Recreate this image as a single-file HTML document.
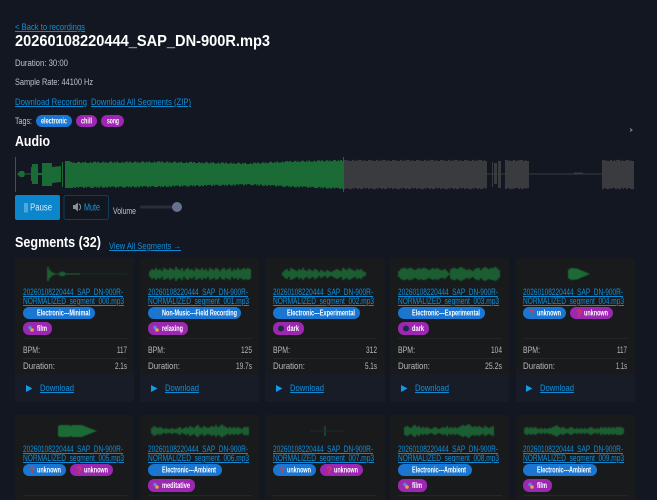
<!DOCTYPE html>
<html><head><meta charset="utf-8"><title>20260108220444_SAP_DN-900R.mp3</title>
<style>
html,body{margin:0;padding:0;background:#131722;width:657px;height:500px;overflow:hidden}
svg{display:block}
text{font-family:"Liberation Sans","DejaVu Sans",sans-serif}
.l{fill:#0f8fd9;font-size:9.5px;text-decoration:underline}
.g{fill:#bfc3ca;font-size:9.5px}
.h{fill:#fff;font-weight:bold}
.cl{fill:#0f90dc;font-size:9.5px;text-decoration:underline}
.p{fill:#fff;font-size:8px;font-weight:bold}
.k{fill:#b5b8bd;font-size:9.5px}
.v{fill:#b5b8bd;font-size:9.5px;text-anchor:end}
.w{stroke:#1c6b36;stroke-width:1.7;fill:none;filter:blur(.4px)}
.q{fill:#e5393f;font-size:10px;font-weight:bold}
.n{fill:#3f6f9c;font-size:8px}
</style></head><body>
<svg xmlns="http://www.w3.org/2000/svg" width="657" height="500" viewBox="0 0 657 500">
<rect width="657" height="500" fill="#131722"/>
<text class="l" x="15" y="30" textLength="70" lengthAdjust="spacingAndGlyphs">&lt; Back to recordings</text>
<text class="h" x="15" y="46" font-size="16" textLength="255" lengthAdjust="spacingAndGlyphs">20260108220444_SAP_DN-900R.mp3</text>
<text class="g" x="15" y="66" textLength="53" lengthAdjust="spacingAndGlyphs">Duration: 30:00</text>
<text class="g" x="15" y="85" textLength="78" lengthAdjust="spacingAndGlyphs">Sample Rate: 44100 Hz</text>
<text class="l" x="15" y="105" textLength="72" lengthAdjust="spacingAndGlyphs">Download Recording</text>
<text class="l" x="91" y="105" textLength="100" lengthAdjust="spacingAndGlyphs">Download All Segments (ZIP)</text>
<text class="g" x="15" y="124" textLength="17" lengthAdjust="spacingAndGlyphs">Tags:</text>
<rect x="36" y="115" width="36" height="12" rx="6" fill="#1976d2"/>
<text class="p" x="41" y="123.500" textLength="26" lengthAdjust="spacingAndGlyphs">electronic</text>
<rect x="76" y="115" width="21" height="12" rx="6" fill="#9c27b0"/>
<text class="p" x="81" y="123.500" textLength="11" lengthAdjust="spacingAndGlyphs">chill</text>
<rect x="101" y="115" width="23" height="12" rx="6" fill="#9c27b0"/>
<text class="p" x="107" y="123.500" textLength="12" lengthAdjust="spacingAndGlyphs">song</text>
<text class="h" x="15" y="146" font-size="15" textLength="35" lengthAdjust="spacingAndGlyphs">Audio</text>
<path d="M630 128.500l2 1.500-2 1.500" fill="none" stroke="#8a8e96" stroke-width="1"/>

<!-- main waveform -->
<g fill="#1b6b37">
<rect x="15" y="157" width="1" height="35"/>
<path d="M17 174l3-3h4l1 3-1 3h-4zM25 173.500h6v1h-6zM31 167h1v14h-1zM32 164h6v20h-6zM38 173h4v2h-4zM42 163h10v23h-10zM52 167l9-1v16l-9 1zM62 162h1v25h-1zM65 161h5v27h-5z"/>
<path d="M70 163L160 162.500L250 164L290 162L343 161V188L290 186L250 184L160 186L70 187z"/>
<rect x="343" y="157" width="1" height="35"/>
</g>
<g fill="none" stroke="#1b6b37" stroke-width="1.2">
<path d="M70 162.500L160 162L250 163.500L290 161.500L343 160.500" stroke-dasharray="2 1 1 3 3 2 1 1 2 4 1 2 3 1 2 3"/>
<path d="M70 187.500L160 186.500L250 184.500L290 186.500L343 188.500" stroke-dasharray="3 1 2 2 1 4 2 1 1 3 4 2 1 1 2 2"/>
</g>
<g fill="#3a3b3e">
<rect x="344" y="161" width="143" height="27"/>
<rect x="487" y="173.500" width="18" height="1"/>
<rect x="492" y="162" width="1" height="25"/>
<rect x="494" y="163" width="3" height="21"/>
<rect x="498" y="161" width="3" height="27"/>
<rect x="505" y="161" width="24" height="27"/>
<rect x="529" y="173.500" width="73" height="1"/>
<rect x="574" y="172.500" width="9" height="1"/>
<rect x="602" y="161" width="32" height="27"/>
</g>
<g fill="none" stroke="#3a3b3e" stroke-width="1.2">
<path d="M344 160.500H487M505 160.500H529M602 160.500H634" stroke-dasharray="3 1 1 3 2 2 1 1 4 2 1 3"/>
<path d="M344 188.500H487M505 188.500H529M602 188.500H634" stroke-dasharray="2 2 4 1 1 3 2 1 3 2 1 2"/>
</g>

<!-- controls -->
<rect x="15" y="195" width="45" height="25" rx="2" fill="#0b85cb"/>
<text x="24" y="210.500" fill="#dfeaf3" font-size="10" textLength="28" lengthAdjust="spacingAndGlyphs">|| Pause</text>
<rect x="64" y="195.500" width="44.500" height="24" rx="2" fill="#12161f" stroke="#0e3f5f"/>
<path d="M73 205h2l3-2.500v9l-3-2.500h-2z" fill="#8a8f98"/><path d="M79 204c2 1 2 5 0 6" stroke="#8a8f98" fill="none"/>
<text x="84" y="210.500" fill="#1a9be0" font-size="10" textLength="16" lengthAdjust="spacingAndGlyphs">Mute</text>
<text class="g" x="113" y="214" textLength="23" lengthAdjust="spacingAndGlyphs">Volume</text>
<rect x="140" y="205.500" width="36" height="3" rx="1.500" fill="#2a2e39"/>
<circle cx="177" cy="207" r="5" fill="#667190"/>
<text class="h" x="15" y="247" font-size="15" textLength="86" lengthAdjust="spacingAndGlyphs">Segments (32)</text>
<text class="l" x="109" y="249" textLength="72" lengthAdjust="spacingAndGlyphs">View All Segments →</text>

<!-- ROW 1 -->
<g>
<rect x="15" y="258" width="119" height="144" rx="2" fill="#191a1c"/>
<path d="M15 374h119v26a2 2 0 0 1-2 2H17a2 2 0 0 1-2-2z" fill="#171c27"/>
<path class="w" d="M48 267V281M50 270V278M52 272V276M54 273V275M56 273.500V274.500M58 273.500V274.500M60 272.500V275.500M62 271.500V276.500M64 272V276M66 273.500V274.500"/>
<path d="M66 274H80" stroke="#1c6b36" stroke-width=".9"/><path d="M80 274H127" stroke="#1a3324" stroke-width=".8"/>
<text class="cl" x="23" y="295" textLength="100" lengthAdjust="spacingAndGlyphs">20260108220444_SAP_DN-900R-</text>
<text class="cl" x="23" y="304" textLength="101" lengthAdjust="spacingAndGlyphs">NORMALIZED_segment_000.mp3</text>
<rect x="23" y="307" width="72" height="12" rx="6" fill="#1976d2"/><text class="n" x="29" y="316">♫</text>
<text class="p" x="37" y="315.500" textLength="53" lengthAdjust="spacingAndGlyphs">Electronic---Minimal</text>
<rect x="23" y="322" width="29" height="13" rx="6" fill="#9c27b0"/><circle cx="30" cy="327.500" r="1.800" fill="#4a90d9"/><circle cx="32" cy="330" r="1.800" fill="#e8a33c"/>
<text class="p" x="37" y="331" textLength="10" lengthAdjust="spacingAndGlyphs">film</text>
<path d="M23 338.500H127M23 358.500H127" stroke="#25262a"/>
<text class="k" x="23" y="353" textLength="17" lengthAdjust="spacingAndGlyphs">BPM:</text><text class="v" x="127" y="353" textLength="10" lengthAdjust="spacingAndGlyphs">117</text>
<text class="k" x="23" y="369" textLength="32" lengthAdjust="spacingAndGlyphs">Duration:</text><text class="v" x="127" y="369" textLength="12" lengthAdjust="spacingAndGlyphs">2.1s</text>
<path d="M26 385l6.500 3.500-6.500 3.500z" fill="#0f9be8"/>
<text class="cl" x="40" y="391" textLength="34" lengthAdjust="spacingAndGlyphs">Download</text>
</g>
<g transform="translate(125 0)">
<rect x="15" y="258" width="119" height="144" rx="2" fill="#191a1c"/>
<path d="M15 374h119v26a2 2 0 0 1-2 2H17a2 2 0 0 1-2-2z" fill="#171c27"/>
<path class="w" d="M25 271V277M27 269V279M29 270V278M31 268V280M33 270V278M35 269V279M37 271V277M39 268V280M41 269V279M43 270V278M45 268V280M47 269V279M49 270V278M51 267V281M53 269V279M55 270V278M57 268V280M59 271V277M61 269V279M63 268V280M65 270V278M67 269V279M69 271V277M71 268V280M73 269V279M75 270V278M77 268V280M79 270V278M81 269V279M83 271V277M85 268V280M87 269V279M89 270V278M91 268V280M93 269V279M95 271V277M97 269V279M99 268V280M101 270V278M103 269V279M105 268V280M107 271V277M109 269V279M111 270V278M113 268V280M115 270V278M117 269V279M119 268V280M121 269V279M123 268V280M125 269V279"/>
<text class="cl" x="23" y="295" textLength="100" lengthAdjust="spacingAndGlyphs">20260108220444_SAP_DN-900R-</text>
<text class="cl" x="23" y="304" textLength="101" lengthAdjust="spacingAndGlyphs">NORMALIZED_segment_001.mp3</text>
<rect x="23" y="307" width="93" height="12" rx="6" fill="#1976d2"/><text class="n" x="29" y="316">♫</text>
<text class="p" x="37" y="315.500" textLength="75" lengthAdjust="spacingAndGlyphs">Non-Music---Field Recording</text>
<rect x="23" y="322" width="40" height="13" rx="6" fill="#9c27b0"/><circle cx="30" cy="327.500" r="1.800" fill="#4a90d9"/><circle cx="32" cy="330" r="1.800" fill="#e8a33c"/>
<text class="p" x="37" y="331" textLength="21" lengthAdjust="spacingAndGlyphs">relaxing</text>
<path d="M23 338.500H127M23 358.500H127" stroke="#25262a"/>
<text class="k" x="23" y="353" textLength="17" lengthAdjust="spacingAndGlyphs">BPM:</text><text class="v" x="127" y="353" textLength="11" lengthAdjust="spacingAndGlyphs">125</text>
<text class="k" x="23" y="369" textLength="32" lengthAdjust="spacingAndGlyphs">Duration:</text><text class="v" x="127" y="369" textLength="16" lengthAdjust="spacingAndGlyphs">19.7s</text>
<path d="M26 385l6.500 3.500-6.500 3.500z" fill="#0f9be8"/>
<text class="cl" x="40" y="391" textLength="34" lengthAdjust="spacingAndGlyphs">Download</text>
</g>
<g transform="translate(250 0)">
<rect x="15" y="258" width="120" height="144" rx="2" fill="#191a1c"/>
<path d="M15 374h120v26a2 2 0 0 1-2 2H17a2 2 0 0 1-2-2z" fill="#171c27"/>
<path class="w" d="M33 272V276M35 270V278M37 269V279M39 271V277M41 268V280M43 269V279M45 270V278M47 271V277M49 269V279M51 270V278M53 268V280M55 270V278M57 271V277M59 269V279M61 270V278M63 271V277M65 269V279M67 270V278M69 272V276M71 270V278M73 271V277M75 272V276M77 270V278M79 271V277M81 272V276M83 271V277M85 270V278M87 269V279M89 270V278M91 271V277M93 268V280M95 269V279M97 270V278M99 268V280M101 269V279M103 270V278M105 271V277M107 269V279M109 270V278M111 269V279M113 271V277M115 272V276"/>
<text class="cl" x="23" y="295" textLength="100" lengthAdjust="spacingAndGlyphs">20260108220444_SAP_DN-900R-</text>
<text class="cl" x="23" y="304" textLength="101" lengthAdjust="spacingAndGlyphs">NORMALIZED_segment_002.mp3</text>
<rect x="23" y="307" width="87" height="12" rx="6" fill="#1976d2"/><text class="n" x="29" y="316">♫</text>
<text class="p" x="37" y="315.500" textLength="68" lengthAdjust="spacingAndGlyphs">Electronic---Experimental</text>
<rect x="23" y="322" width="31" height="13" rx="6" fill="#9c27b0"/><circle cx="31" cy="328.500" r="3" fill="#1c2a44"/>
<text class="p" x="37" y="331" textLength="12" lengthAdjust="spacingAndGlyphs">dark</text>
<path d="M23 338.500H127M23 358.500H127" stroke="#25262a"/>
<text class="k" x="23" y="353" textLength="17" lengthAdjust="spacingAndGlyphs">BPM:</text><text class="v" x="127" y="353" textLength="11" lengthAdjust="spacingAndGlyphs">312</text>
<text class="k" x="23" y="369" textLength="32" lengthAdjust="spacingAndGlyphs">Duration:</text><text class="v" x="127" y="369" textLength="12" lengthAdjust="spacingAndGlyphs">5.1s</text>
<path d="M26 385l6.500 3.500-6.500 3.500z" fill="#0f9be8"/>
<text class="cl" x="40" y="391" textLength="34" lengthAdjust="spacingAndGlyphs">Download</text>
</g>
<g transform="translate(375 0)">
<rect x="15" y="258" width="119" height="144" rx="2" fill="#191a1c"/>
<path d="M15 374h119v26a2 2 0 0 1-2 2H17a2 2 0 0 1-2-2z" fill="#171c27"/>
<path class="w" d="M24 271V277M26 269V279M28 268V280M30 268V280M32 269V279M34 268V280M36 268V280M38 269V279M40 270V278M42 269V279M44 268V280M46 269V279M48 268V280M50 268V280M52 269V279M54 270V278M56 269V279M58 268V280M60 269V279M62 268V280M64 269V279M66 270V278M68 270V278M70 269V279M72 271V277M74 273V275M76 269V279M78 268V280M80 268V280M82 269V279M84 268V280M86 267V281M88 268V280M90 269V279M92 270V278M94 269V279M96 270V278M98 271V277M100 269V279M102 268V280M104 268V280M106 270V278M108 268V280M110 267V281M112 268V280M114 269V279M116 268V280M118 268V280M120 267V281M122 268V280M124 270V278"/>
<text class="cl" x="23" y="295" textLength="100" lengthAdjust="spacingAndGlyphs">20260108220444_SAP_DN-900R-</text>
<text class="cl" x="23" y="304" textLength="101" lengthAdjust="spacingAndGlyphs">NORMALIZED_segment_003.mp3</text>
<rect x="23" y="307" width="87" height="12" rx="6" fill="#1976d2"/><text class="n" x="29" y="316">♫</text>
<text class="p" x="37" y="315.500" textLength="68" lengthAdjust="spacingAndGlyphs">Electronic---Experimental</text>
<rect x="23" y="322" width="31" height="13" rx="6" fill="#9c27b0"/><circle cx="31" cy="328.500" r="3" fill="#1c2a44"/>
<text class="p" x="37" y="331" textLength="12" lengthAdjust="spacingAndGlyphs">dark</text>
<path d="M23 338.500H127M23 358.500H127" stroke="#25262a"/>
<text class="k" x="23" y="353" textLength="17" lengthAdjust="spacingAndGlyphs">BPM:</text><text class="v" x="127" y="353" textLength="11" lengthAdjust="spacingAndGlyphs">104</text>
<text class="k" x="23" y="369" textLength="32" lengthAdjust="spacingAndGlyphs">Duration:</text><text class="v" x="127" y="369" textLength="17" lengthAdjust="spacingAndGlyphs">25.2s</text>
<path d="M26 385l6.500 3.500-6.500 3.500z" fill="#0f9be8"/>
<text class="cl" x="40" y="391" textLength="34" lengthAdjust="spacingAndGlyphs">Download</text>
</g>
<g transform="translate(501 0)">
<rect x="15" y="258" width="119" height="144" rx="2" fill="#191a1c"/>
<path d="M15 374h119v26a2 2 0 0 1-2 2H17a2 2 0 0 1-2-2z" fill="#171c27"/>
<path d="M67 270L70 268L76 268.500L89 274L76 279.500L70 280L67 278z" fill="#1c6b36" style="filter:blur(.4px)"/>
<text class="cl" x="22" y="295" textLength="100" lengthAdjust="spacingAndGlyphs">20260108220444_SAP_DN-900R-</text>
<text class="cl" x="22" y="304" textLength="101" lengthAdjust="spacingAndGlyphs">NORMALIZED_segment_004.mp3</text>
<rect x="22" y="307" width="43" height="12" rx="6" fill="#1976d2"/><text class="q" x="28" y="316.500">?</text>
<text class="p" x="36" y="315.500" textLength="24" lengthAdjust="spacingAndGlyphs">unknown</text>
<rect x="69" y="307" width="43" height="12" rx="6" fill="#9c27b0"/><text class="q" x="75" y="316.500">?</text>
<text class="p" x="83" y="315.500" textLength="24" lengthAdjust="spacingAndGlyphs">unknown</text>
<path d="M22 338.500H126M22 358.500H126" stroke="#25262a"/>
<text class="k" x="22" y="353" textLength="17" lengthAdjust="spacingAndGlyphs">BPM:</text><text class="v" x="126" y="353" textLength="10" lengthAdjust="spacingAndGlyphs">117</text>
<text class="k" x="22" y="369" textLength="32" lengthAdjust="spacingAndGlyphs">Duration:</text><text class="v" x="126" y="369" textLength="11" lengthAdjust="spacingAndGlyphs">1.1s</text>
<path d="M25 385l6.500 3.500-6.500 3.500z" fill="#0f9be8"/>
<text class="cl" x="39" y="391" textLength="34" lengthAdjust="spacingAndGlyphs">Download</text>
</g>

<!-- ROW 2 -->
<g transform="translate(0 157)">
<rect x="15" y="258" width="119" height="100" rx="2" fill="#191a1c"/>
<path d="M58 269L60 268H69L71 269L72 268H82L84 269L97 274L84 279L82 280H72L71 279L69 280H60L58 279z" fill="#1c6b36" style="filter:blur(.4px)"/>
<text class="cl" x="23" y="295" textLength="100" lengthAdjust="spacingAndGlyphs">20260108220444_SAP_DN-900R-</text>
<text class="cl" x="23" y="304" textLength="101" lengthAdjust="spacingAndGlyphs">NORMALIZED_segment_005.mp3</text>
<rect x="23" y="307" width="43" height="12" rx="6" fill="#1976d2"/><text class="q" x="29" y="316.500">?</text>
<text class="p" x="37" y="315.500" textLength="24" lengthAdjust="spacingAndGlyphs">unknown</text>
<rect x="70" y="307" width="43" height="12" rx="6" fill="#9c27b0"/><text class="q" x="76" y="316.500">?</text>
<text class="p" x="84" y="315.500" textLength="24" lengthAdjust="spacingAndGlyphs">unknown</text>
<path d="M23 338.500H127" stroke="#25262a"/>
</g>
<g transform="translate(125 157)">
<rect x="15" y="258" width="119" height="100" rx="2" fill="#191a1c"/>
<path class="w" d="M27 271V277M29 269V279M31 270V278M33 271V277M35 270V278M37 271V277M39 272V276M41 271V277M43 272V276M45 272V276M47 271V277M49 272V276M51 272V276M53 271V277M55 270V278M57 272V276M59 271V277M61 270V278M63 271V277M65 269V279M67 270V278M69 271V277M71 269V279M73 268V280M75 270V278M77 271V277M79 269V279M81 270V278M83 271V277M85 270V278M87 269V279M89 270V278M91 268V280M93 270V278M95 269V279M97 267.500V280.500M99 269V279M101 270V278M103 271V277M105 270V278M107 271V277M109 270V278M111 271V277M113 270V278M115 271V277M117 272V276M119 270V278M121 270V278M123 270V278"/>
<text class="cl" x="23" y="295" textLength="100" lengthAdjust="spacingAndGlyphs">20260108220444_SAP_DN-900R-</text>
<text class="cl" x="23" y="304" textLength="101" lengthAdjust="spacingAndGlyphs">NORMALIZED_segment_006.mp3</text>
<rect x="23" y="307" width="74" height="12" rx="6" fill="#1976d2"/><text class="n" x="29" y="316">♫</text>
<text class="p" x="37" y="315.500" textLength="54" lengthAdjust="spacingAndGlyphs">Electronic---Ambient</text>
<rect x="23" y="322" width="47" height="13" rx="6" fill="#9c27b0"/><circle cx="30" cy="327.500" r="1.800" fill="#4a90d9"/><circle cx="32" cy="330" r="1.800" fill="#e8a33c"/>
<text class="p" x="37" y="331" textLength="28" lengthAdjust="spacingAndGlyphs">meditative</text>
<path d="M23 338.500H127" stroke="#25262a"/>
</g>
<g transform="translate(250 157)">
<rect x="15" y="258" width="120" height="100" rx="2" fill="#191a1c"/>
<path d="M75 269V279" stroke="#1c6b36" stroke-width="1"/><path d="M60 274H95" stroke="#1a3324" stroke-width=".7"/>
<text class="cl" x="23" y="295" textLength="100" lengthAdjust="spacingAndGlyphs">20260108220444_SAP_DN-900R-</text>
<text class="cl" x="23" y="304" textLength="101" lengthAdjust="spacingAndGlyphs">NORMALIZED_segment_007.mp3</text>
<rect x="23" y="307" width="43" height="12" rx="6" fill="#1976d2"/><text class="q" x="29" y="316.500">?</text>
<text class="p" x="37" y="315.500" textLength="24" lengthAdjust="spacingAndGlyphs">unknown</text>
<rect x="70" y="307" width="43" height="12" rx="6" fill="#9c27b0"/><text class="q" x="76" y="316.500">?</text>
<text class="p" x="84" y="315.500" textLength="24" lengthAdjust="spacingAndGlyphs">unknown</text>
<path d="M23 338.500H127" stroke="#25262a"/>
</g>
<g transform="translate(375 157)">
<rect x="15" y="258" width="119" height="100" rx="2" fill="#191a1c"/>
<path class="w" d="M30 270V278M32 269V279M34 270V278M36 271V277M38 269V279M40 268V280M42 270V278M44 269V279M46 271V277M48 270V278M50 271V277M52 270V278M54 271V277M56 272V276M58 271V277M60 270V278M62 271V277M64 272V276M66 271V277M68 270V278M70 271V277M72 269V279M74 271V277M76 270V278M78 271V277M80 270V278M82 271V277M84 270V278M86 269V279M88 268V280M90 269V279M92 268V280M94 267V281M96 269V279M98 270V278M100 269V279M102 270V278M104 269V279M106 270V278M108 271V277M110 269V279M112 270V278M114 271V277M116 270V278M118 269V279"/>
<text class="cl" x="23" y="295" textLength="100" lengthAdjust="spacingAndGlyphs">20260108220444_SAP_DN-900R-</text>
<text class="cl" x="23" y="304" textLength="101" lengthAdjust="spacingAndGlyphs">NORMALIZED_segment_008.mp3</text>
<rect x="23" y="307" width="74" height="12" rx="6" fill="#1976d2"/><text class="n" x="29" y="316">♫</text>
<text class="p" x="37" y="315.500" textLength="54" lengthAdjust="spacingAndGlyphs">Electronic---Ambient</text>
<rect x="23" y="322" width="29" height="13" rx="6" fill="#9c27b0"/><circle cx="30" cy="327.500" r="1.800" fill="#4a90d9"/><circle cx="32" cy="330" r="1.800" fill="#e8a33c"/>
<text class="p" x="37" y="331" textLength="10" lengthAdjust="spacingAndGlyphs">film</text>
<path d="M23 338.500H127" stroke="#25262a"/>
</g>
<g transform="translate(501 157)">
<rect x="15" y="258" width="119" height="100" rx="2" fill="#191a1c"/>
<path class="w" d="M24 271V277M26 270V278M28 271V277M30 270V278M32 271V277M34 270V278M36 271V277M38 272V276M40 271V277M42 272V276M44 271V277M46 272V276M48 271V277M50 271V277M52 270V278M54 269V279M56 268.500V279.500M58 270V278M60 271V277M62 270V278M64 271V277M66 272V276M68 271V277M70 270V278M72 271V277M74 272V276M76 271V277M78 272V276M80 271V277M82 272V276M84 271V277M86 272V276M88 271V277M90 270V278M92 271V277M94 272V276M96 271V277M98 272V276M100 270V278M102 271V277M104 270V278M106 271V277M108 270V278M110 271V277M112 270V278M114 271V277M116 270V278M118 270V278M120 270V278M122 271V277"/>
<text class="cl" x="22" y="295" textLength="100" lengthAdjust="spacingAndGlyphs">20260108220444_SAP_DN-900R-</text>
<text class="cl" x="22" y="304" textLength="101" lengthAdjust="spacingAndGlyphs">NORMALIZED_segment_009.mp3</text>
<rect x="22" y="307" width="74" height="12" rx="6" fill="#1976d2"/><text class="n" x="28" y="316">♫</text>
<text class="p" x="36" y="315.500" textLength="54" lengthAdjust="spacingAndGlyphs">Electronic---Ambient</text>
<rect x="22" y="322" width="29" height="13" rx="6" fill="#9c27b0"/><circle cx="29" cy="327.500" r="1.800" fill="#4a90d9"/><circle cx="31" cy="330" r="1.800" fill="#e8a33c"/>
<text class="p" x="36" y="331" textLength="10" lengthAdjust="spacingAndGlyphs">film</text>
<path d="M22 338.500H126" stroke="#25262a"/>
</g>
</svg>
</body></html>
